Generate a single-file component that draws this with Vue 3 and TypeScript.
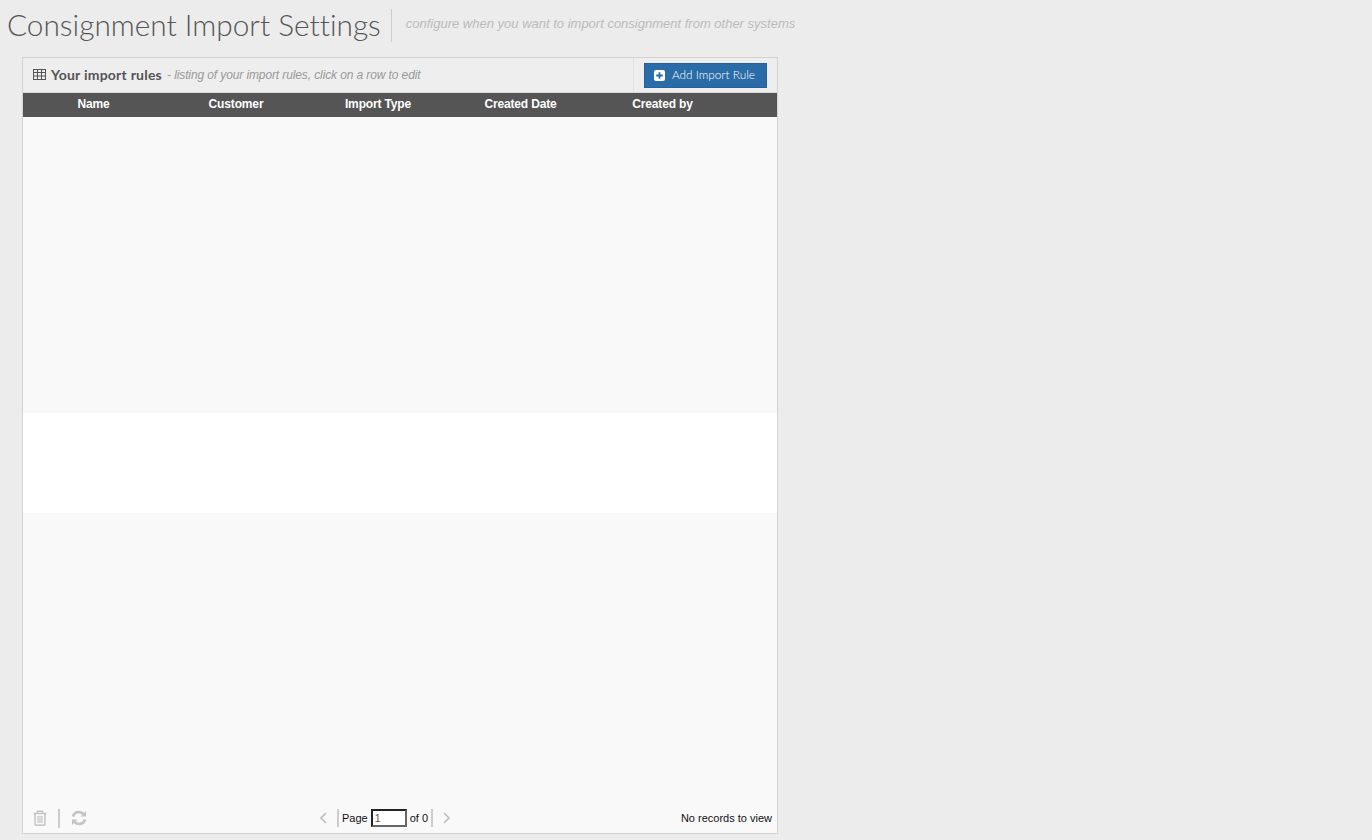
<script setup lang="ts">
const columns = [
  { label: 'Name', width: 141 },
  { label: 'Customer', width: 144 },
  { label: 'Import Type', width: 140 },
  { label: 'Created Date', width: 145 },
  { label: 'Created by', width: 139 },
]
</script>

<template>
  <div class="page">
    <header class="pageHead">
      <h1 class="title">Consignment Import Settings</h1>
      <p class="subtitle">configure when you want to import consignment from other systems</p>
    </header>

    <section class="panel">
      <div class="panelHead">
        <div class="caption">
          <svg class="tableIcon" width="13" height="11" viewBox="0 0 13 11" fill="none" stroke="#555" stroke-width="1">
            <rect x="0.5" y="0.5" width="12" height="10" />
            <path d="M0 3.5h13M0 7h13M4.5 0v11M8.5 0v11" />
          </svg>
          <strong class="captionTitle">Your import rules</strong>
          <em class="captionNote">- listing of your import rules, click on a row to edit</em>
        </div>
        <div class="actions">
          <button class="addBtn" type="button">
            <svg width="11" height="11" viewBox="0 0 11 11">
              <rect width="11" height="11" rx="2" fill="#fff" />
              <path d="M5.5 2.2v6.6M2.2 5.5h6.6" stroke="#2a6ca8" stroke-width="1.8" />
            </svg>
            <span class="addLabel">Add Import Rule</span>
          </button>
        </div>
      </div>

      <div class="columns">
        <div v-for="col in columns" :key="col.label" class="column" :style="{ width: col.width + 'px' }">
          {{ col.label }}
        </div>
      </div>

      <div class="rows">
        <div class="stripe first"></div>
        <div class="stripe blank"></div>
        <div class="stripe last"></div>
      </div>

      <footer class="pager">
        <div class="pagerLeft">
          <svg width="14" height="16" viewBox="0 0 14 16" fill="none" stroke="#c4c4c4">
            <path d="M0.5 3.5h13" stroke-width="1.4" />
            <path d="M4.5 3V1.2h5V3" stroke-width="1.4" />
            <path d="M2 3.5v10.2c0 1 .6 1.6 1.5 1.6h7c.9 0 1.5-.6 1.5-1.6V3.5" stroke-width="1.5" />
            <path d="M5 6v7M7 6v7M9 6v7" stroke-width="1.2" />
          </svg>
          <span class="sep tall"></span>
          <svg width="16" height="16" viewBox="0 0 16 16" fill="none" stroke="#c4c4c4" stroke-width="2.7">
            <path d="M2 6.6C2.7 3.8 5 2 7.9 2c1.9 0 3.5.8 4.6 2.1" />
            <path d="M14 9.4c-.7 2.8-3 4.6-5.9 4.6-1.9 0-3.5-.8-4.6-2.1" />
            <path d="M15 1v5.5H9.5z" fill="#c4c4c4" stroke="none" />
            <path d="M1 15V9.5h5.5z" fill="#c4c4c4" stroke="none" />
          </svg>
        </div>

        <div class="pagerCenter">
          <svg class="chev" width="8" height="12" viewBox="0 0 8 12" fill="none" stroke="#bdbdbd" stroke-width="1.6">
            <path d="M7 1L2 6l5 5" />
          </svg>
          <span class="sep"></span>
          <span class="pageText">Page</span>
          <input class="pageInput" type="text" value="1" />
          <span class="pageText">of 0</span>
          <span class="sep"></span>
          <svg class="chev" width="8" height="12" viewBox="0 0 8 12" fill="none" stroke="#bdbdbd" stroke-width="1.6">
            <path d="M1 1l5 5-5 5" />
          </svg>
        </div>

        <div class="pagerRight">No records to view</div>
      </footer>
    </section>
  </div>
</template>

<style>
html,
body {
  margin: 0;
  background: #ececec;
}
</style>

<style scoped>
.page {
  width: 1372px;
  height: 840px;
  box-sizing: border-box;
  background: #ececec;
  font-family: "Liberation Sans", Arial, sans-serif;
  overflow: hidden;
}

.pageHead {
  display: flex;
  align-items: center;
  height: 57px;
  padding: 0 0 7px 7px;
  box-sizing: border-box;
}

.title {
  margin: 0;
  padding-right: 10px;
  height: 33px;
  line-height: 31px;
  font-family: Lato, sans-serif;
  font-size: 29.8px;
  font-weight: 300;
  font-variant-ligatures: none;
  color: #555;
  border-right: 1px solid #ccc;
}

.subtitle {
  margin: 0 0 4px 14px;
  font-size: 13px;
  font-style: italic;
  color: #bbb;
}

.panel {
  display: flex;
  flex-direction: column;
  width: 756px;
  height: 777px;
  margin-left: 22px;
  box-sizing: border-box;
  border: 1px solid #d2d2d2;
  background: #f9f9f9;
}

.panelHead {
  display: flex;
  justify-content: space-between;
  height: 35px;
  box-sizing: border-box;
  background: #eee;
  border-bottom: 1px solid #d8d8d8;
  flex-shrink: 0;
}

.caption {
  display: flex;
  align-items: center;
  padding: 0 0 2px 10px;
}

.tableIcon {
  margin-right: 5px;
}

.captionTitle {
  font-family: Lato, sans-serif;
  font-size: 14px;
  font-weight: 700;
  letter-spacing: 0.23px;
  color: #555;
}

.captionNote {
  margin: 1px 0 0 5px;
  font-size: 12px;
  letter-spacing: -0.11px;
  color: #999;
}

.actions {
  display: flex;
  align-items: center;
  width: 144px;
  padding-left: 10px;
  box-sizing: border-box;
  border-left: 1px solid #e2e2e2;
}

.addBtn {
  display: flex;
  align-items: center;
  gap: 7px;
  width: 123px;
  height: 25px;
  padding: 0 0 0 9px;
  box-sizing: border-box;
  border: 1px solid #25619a;
  border-radius: 0;
  background: #2a6ca8;
  color: #fff;
  font-family: Lato, sans-serif;
  font-size: 11.8px;
  font-weight: 300;
}

.addLabel {
  margin-bottom: 1px;
}

.columns {
  display: flex;
  height: 24px;
  background: #555;
  flex-shrink: 0;
}

.column {
  box-sizing: border-box;
  text-align: center;
  line-height: 23px;
  font-size: 12px;
  font-weight: 700;
  letter-spacing: -0.15px;
  color: #fff;
}

.rows {
  display: flex;
  flex-direction: column;
}

.stripe {
  background: #f9f9f9;
}

.first {
  height: 296px;
}

.blank {
  height: 100px;
  background: #fff;
}

.last {
  height: 290px;
}

.pager {
  display: grid;
  grid-template-columns: 276px auto 1fr;
  align-items: center;
  height: 31px;
  padding: 0 5px 0 10px;
  box-sizing: border-box;
}

.pagerLeft {
  display: flex;
  align-items: center;
  gap: 11px;
}

.pagerCenter {
  display: flex;
  align-items: center;
  font-size: 11px;
  color: #111;
}

.chev {
  margin: 0 10px;
}

.sep {
  display: block;
  width: 2px;
  height: 18px;
  background: #ccc;
}

.sep.tall {
  height: 19px;
}

.pageText {
  margin: 0 3px;
}

.pageInput {
  width: 36px;
  height: 18px;
  padding: 0 0 0 2px;
  box-sizing: border-box;
  border: 2px solid;
  border-color: #222 #666 #666 #222;
  background: #fff;
  font-family: "Liberation Sans", Arial, sans-serif;
  font-size: 10.5px;
  color: #555;
  outline: none;
}

.pagerRight {
  text-align: right;
  font-size: 11px;
  color: #111;
}
</style>
